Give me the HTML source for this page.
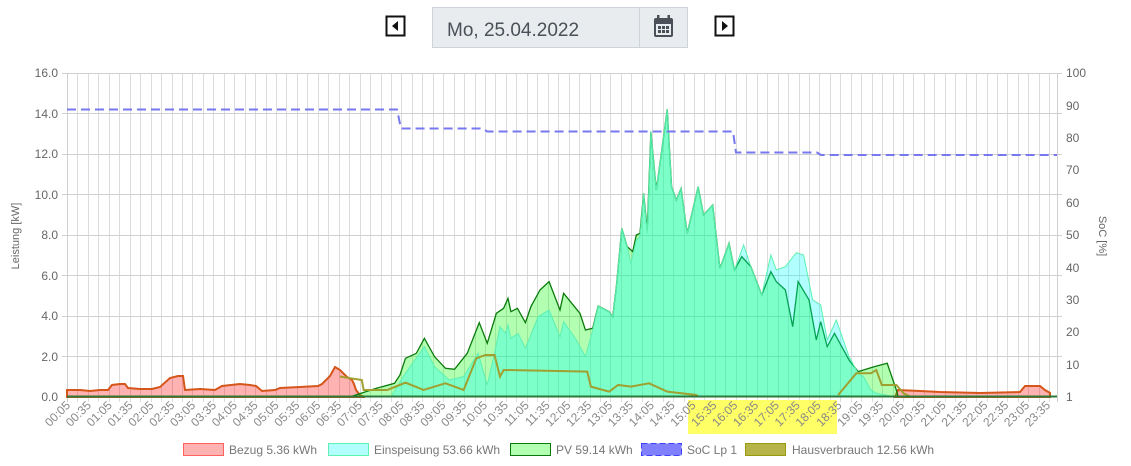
<!DOCTYPE html>
<html><head><meta charset="utf-8"><style>
body{margin:0;width:1131px;height:466px;background:#fff;overflow:hidden;font-family:"Liberation Sans",sans-serif;}
svg{position:absolute;left:0;top:0}
</style></head><body>
<svg width="1131" height="466" viewBox="0 0 1131 466" xmlns="http://www.w3.org/2000/svg" font-family="Liberation Sans, sans-serif">
<rect x="386.5" y="16.5" width="18" height="19" fill="#fff" stroke="#111" stroke-width="2"/>
<path d="M398 21 L392 26 L398 31Z" fill="#111"/>
<rect x="715.5" y="16.5" width="18" height="19" fill="#fff" stroke="#111" stroke-width="2"/>
<path d="M722 21 L728 26 L722 31Z" fill="#111"/>
<rect x="432.5" y="7.5" width="255" height="40" fill="#e9ecef" stroke="#ced4da"/>
<line x1="639.5" y1="8" x2="639.5" y2="47" stroke="#ced4da"/>
<text x="447" y="36" font-size="19" fill="#495057">Mo, 25.04.2022</text>
<g fill="#495057"><rect x="654" y="18" width="19" height="19" rx="2"/><rect x="657" y="15" width="2.5" height="5"/><rect x="667.5" y="15" width="2.5" height="5"/></g>
<rect x="656" y="24" width="15" height="11" fill="#e9ecef"/>
<g fill="#495057"><rect x="658" y="26" width="3" height="3"/><rect x="662" y="26" width="3" height="3"/><rect x="666" y="26" width="3" height="3"/><rect x="658" y="30" width="3" height="3"/><rect x="662" y="30" width="3" height="3"/><rect x="666" y="30" width="3" height="3"/></g>
<g stroke="#dcdcdc" stroke-width="1" id="vg"></g>
<g stroke="#d0d0d0">
<line x1="62" y1="73.5" x2="1062" y2="73.5"/><line x1="62" y1="113.5" x2="1062" y2="113.5"/><line x1="62" y1="154.5" x2="1062" y2="154.5"/><line x1="62" y1="194.5" x2="1062" y2="194.5"/><line x1="62" y1="235.5" x2="1062" y2="235.5"/><line x1="62" y1="275.5" x2="1062" y2="275.5"/><line x1="62" y1="316.5" x2="1062" y2="316.5"/><line x1="62" y1="356.5" x2="1062" y2="356.5"/>
<line x1="67.5" y1="73" x2="67.5" y2="402"/><line x1="1057.5" y1="73" x2="1057.5" y2="402"/>
</g>
<rect x="688" y="400" width="149" height="34" fill="#ffff66"/>
<path d="M67,397 L67,390 80,390 90,391 100,390 108,390 112,385 120,384 125,384 128,388 140,389 152,389 160,387 170,378 178,376 183,376 185,390 200,389 215,390 222,386 240,384 250,385 256,386 262,391 275,390 280,388 300,387 318,386 322,384 330,376 335,367 340,370 347,377 352,380 354,384 356,390 360,395 365,397Z" fill="rgba(255,0,0,0.3)" stroke="#d4561a" stroke-width="2"/>
<path d="M895,397 L898,390 920,391 940,392 980,393 1020,392 1025,386 1040,386 1045,390 1050,393 1050,397Z" fill="rgba(255,0,0,0.3)" stroke="#d4561a" stroke-width="2"/>
<g transform="translate(340,100) scale(0.3636,0.3333)">
<path d="M30,890 100,865 150,850 165,825 180,775 210,760 232,715 260,770 290,805 315,808 350,760 383,668 405,730 430,640 450,625 462,595 470,635 488,625 510,668 525,620 550,570 575,545 605,630 615,580 660,640 675,690 695,685 710,618 740,635 750,650 760,560 775,385 790,440 805,455 815,405 825,400 835,280 845,390 855,95 870,270 885,150 900,28 912,260 925,300 938,265 955,400 970,330 985,260 1000,345 1025,315 1045,505 1070,430 1085,510 1105,470 1130,500 1160,585 1185,515 1200,545 1225,570 1245,680 1260,545 1290,600 1310,720 1322,665 1340,740 1360,700 1400,780 1425,815 1470,800 1505,790 1530,870 1535,890Z" fill="rgba(0,255,0,0.3)" stroke="#0a7a0a" stroke-width="1.3" vector-effect="non-scaling-stroke"/>
<path d="M140,890 180,820 232,740 260,800 300,840 340,830 380,760 405,855 425,760 440,680 455,700 462,675 470,715 490,700 510,745 545,650 575,630 605,710 615,665 650,720 675,770 695,690 710,618 740,635 750,650 760,560 775,385 790,440 800,490 815,420 825,410 835,280 845,400 855,95 870,270 885,150 900,28 912,260 925,300 938,265 955,400 970,330 985,260 1000,345 1025,315 1045,505 1070,430 1085,510 1110,435 1130,500 1160,585 1185,465 1200,510 1225,500 1255,458 1275,465 1300,600 1322,615 1340,720 1365,660 1400,770 1425,820 1440,830 1460,870 1475,880 1500,885 1520,890Z" fill="rgba(0,255,255,0.3)" stroke="#5ef0b0" stroke-width="1" vector-effect="non-scaling-stroke"/>
<path d="M0,830 30,835 60,840 65,870 100,870 130,870 180,848 230,870 290,850 340,870 375,775 400,765 425,765 440,830 450,810 680,815 690,860 740,875 765,855 800,860 850,850 900,875 980,885 985,890 M1370,885 1420,820 1460,820 1475,810 1490,855 1530,855 1550,880 1568,890" fill="none" stroke="#a0a030" stroke-width="2" vector-effect="non-scaling-stroke"/>
</g>
<line x1="67" y1="396.5" x2="1057" y2="396.5" stroke="#2a7a3a" stroke-width="2"/>
<path d="M67,109.5 L397,109.5 401,128.5 483,128.5 487,131.5 733,131.5 736,152.5 817,152.5 821,155 1057,155" fill="none" stroke="#7777f0" stroke-width="2" stroke-dasharray="9,5"/>
<g font-size="12" fill="#666" text-anchor="end">
<text x="58" y="77">16.0</text><text x="58" y="118">14.0</text><text x="58" y="158">12.0</text><text x="58" y="199">10.0</text><text x="58" y="239">8.0</text><text x="58" y="280">6.0</text><text x="58" y="320">4.0</text><text x="58" y="361">2.0</text><text x="58" y="401">0.0</text>
</g>
<g font-size="12" fill="#666">
<text x="1066" y="77">100</text><text x="1066" y="110">90</text><text x="1066" y="142">80</text><text x="1066" y="174">70</text><text x="1066" y="207">60</text><text x="1066" y="239">50</text><text x="1066" y="272">40</text><text x="1066" y="304">30</text><text x="1066" y="336">20</text><text x="1066" y="369">10</text><text x="1066" y="401">1</text>
</g>
<text transform="translate(19,236) rotate(-90)" font-size="11" fill="#666" text-anchor="middle">Leistung [kW]</text>
<text transform="translate(1099,236) rotate(90)" font-size="11" fill="#666" text-anchor="middle">SoC [%]</text>
<g id="xl" font-size="12" fill="#888" text-anchor="end"></g>
<g font-size="12" fill="#777">
<rect x="183.5" y="443.5" width="40" height="12" fill="rgba(255,0,0,0.3)" stroke="#ff6060"/><text x="229" y="454">Bezug 5.36 kWh</text>
<rect x="328.5" y="443.5" width="40" height="12" fill="rgba(0,255,255,0.3)" stroke="#60f0b0"/><text x="374" y="454">Einspeisung 53.66 kWh</text>
<rect x="510.5" y="443.5" width="40" height="12" fill="rgba(0,255,0,0.3)" stroke="#0a7a0a"/><text x="556" y="454">PV 59.14 kWh</text>
<rect x="641.5" y="443.5" width="40" height="12" fill="#8080ff" stroke="#4040ff" stroke-dasharray="6,3"/><text x="687" y="454">SoC Lp 1</text>
<rect x="745.5" y="443.5" width="40" height="12" fill="#b5b54a" stroke="#9a9a10"/><text x="792" y="454">Hausverbrauch 12.56 kWh</text>
</g>
</svg>
<script>
var ns="http://www.w3.org/2000/svg";
var vg=document.getElementById("vg");
for(var i=0;i<95;i++){var x=Math.round(67+i*10.45)+0.5;var l=document.createElementNS(ns,"line");l.setAttribute("x1",x);l.setAttribute("x2",x);l.setAttribute("y1",73);l.setAttribute("y2",402);vg.appendChild(l);}
var xl=document.getElementById("xl");
for(var j=0;j<48;j++){var m=5+j*30;var h=Math.floor(m/60),mm=m%60;var s=(h<10?"0":"")+h+":"+(mm<10?"0":"")+mm;var x=67+j*20.85;var t=document.createElementNS(ns,"text");t.setAttribute("transform","translate("+(x+4)+",406) rotate(-45)");t.textContent=s;xl.appendChild(t);}
</script>
</body></html>
